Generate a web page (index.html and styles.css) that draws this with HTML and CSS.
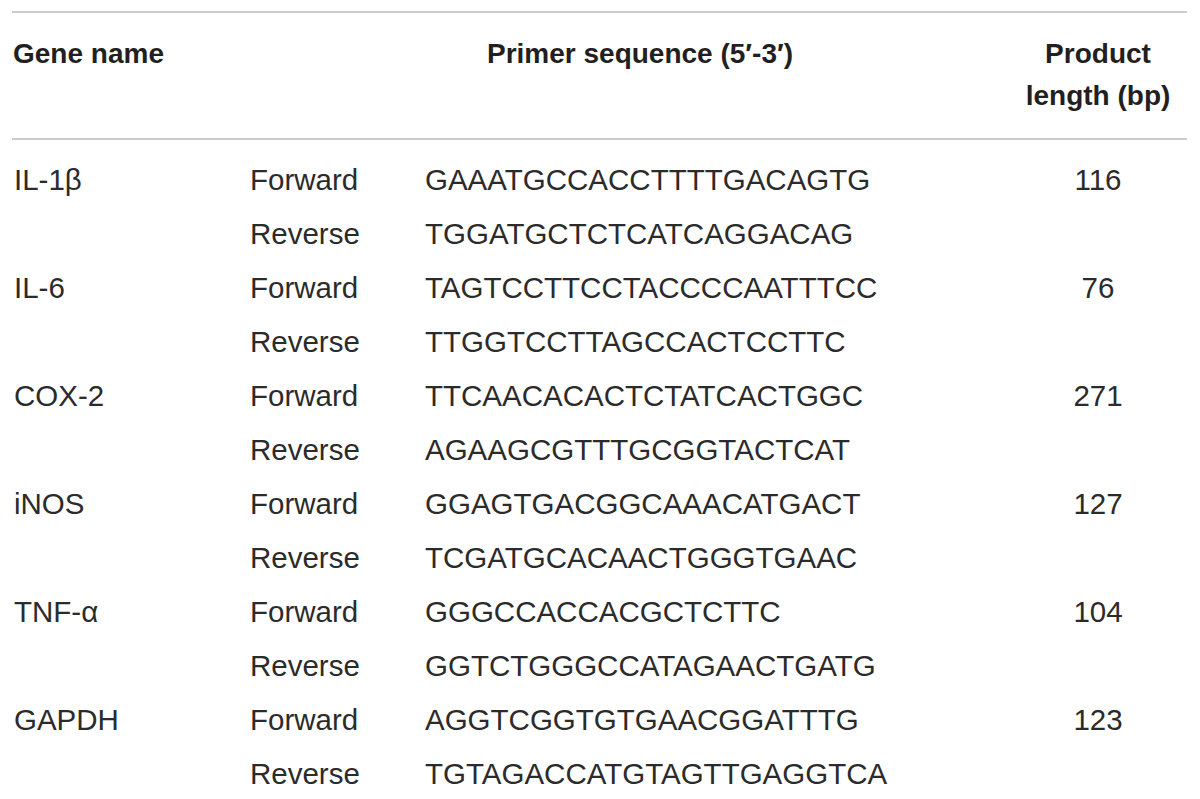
FILE: index.html
```html
<!DOCTYPE html>
<html lang="en">
<head>
<meta charset="utf-8">
<title>Primer sequences</title>
<link rel="stylesheet" href="styles.css">
</head>
<body>
<div class="table">
  <div class="head">
    <div class="h-gene">Gene name</div>
    <div class="h-primer">Primer sequence (5′-3′)</div>
    <div class="h-len">Product<br>length (bp)</div>
  </div>
  <div class="body">
    <div class="row"><div>IL-1β</div><div>Forward</div><div>GAAATGCCACCTTTTGACAGTG</div><div class="num">116</div></div>
    <div class="row"><div></div><div>Reverse</div><div>TGGATGCTCTCATCAGGACAG</div><div class="num"></div></div>
    <div class="row"><div>IL-6</div><div>Forward</div><div>TAGTCCTTCCTACCCCAATTTCC</div><div class="num">76</div></div>
    <div class="row"><div></div><div>Reverse</div><div>TTGGTCCTTAGCCACTCCTTC</div><div class="num"></div></div>
    <div class="row"><div>COX-2</div><div>Forward</div><div>TTCAACACACTCTATCACTGGC</div><div class="num">271</div></div>
    <div class="row"><div></div><div>Reverse</div><div>AGAAGCGTTTGCGGTACTCAT</div><div class="num"></div></div>
    <div class="row"><div>iNOS</div><div>Forward</div><div>GGAGTGACGGCAAACATGACT</div><div class="num">127</div></div>
    <div class="row"><div></div><div>Reverse</div><div>TCGATGCACAACTGGGTGAAC</div><div class="num"></div></div>
    <div class="row"><div>TNF-α</div><div>Forward</div><div>GGGCCACCACGCTCTTC</div><div class="num">104</div></div>
    <div class="row"><div></div><div>Reverse</div><div>GGTCTGGGCCATAGAACTGATG</div><div class="num"></div></div>
    <div class="row"><div>GAPDH</div><div>Forward</div><div>AGGTCGGTGTGAACGGATTTG</div><div class="num">123</div></div>
    <div class="row"><div></div><div>Reverse</div><div>TGTAGACCATGTAGTTGAGGTCA</div><div class="num"></div></div>
  </div>
</div>
</body>
</html>
```

FILE: styles.css
```css
html, body {
  margin: 0;
  padding: 0;
  background: #ffffff;
}

body {
  font-family: "Liberation Sans", Arial, sans-serif;
  color: #231f20;
}

.table {
  margin: 11px 12px 0 12px;
  width: 1175px;
  border-top: 2px solid #cccccc;
}

.head {
  display: grid;
  grid-template-columns: 413px 1fr 178px;
  height: 127px;
  box-sizing: border-box;
  border-bottom: 2px solid #cccccc;
  font-weight: bold;
  font-size: 28px;
  line-height: 42px;
  padding-top: 20px;
}

.h-gene {
  padding-left: 1px;
}

.h-primer {
  padding-left: 62px;
}

.h-len {
  text-align: center;
}

.body {
  padding-top: 13px;
}

.row {
  display: grid;
  grid-template-columns: 238px 175px 1fr 178px;
  height: 54px;
  font-size: 29.5px;
  line-height: 54px;
  color: #2b2b2b;
}

.row > div:first-child {
  padding-left: 2px;
}

.num {
  text-align: center;
}
```
